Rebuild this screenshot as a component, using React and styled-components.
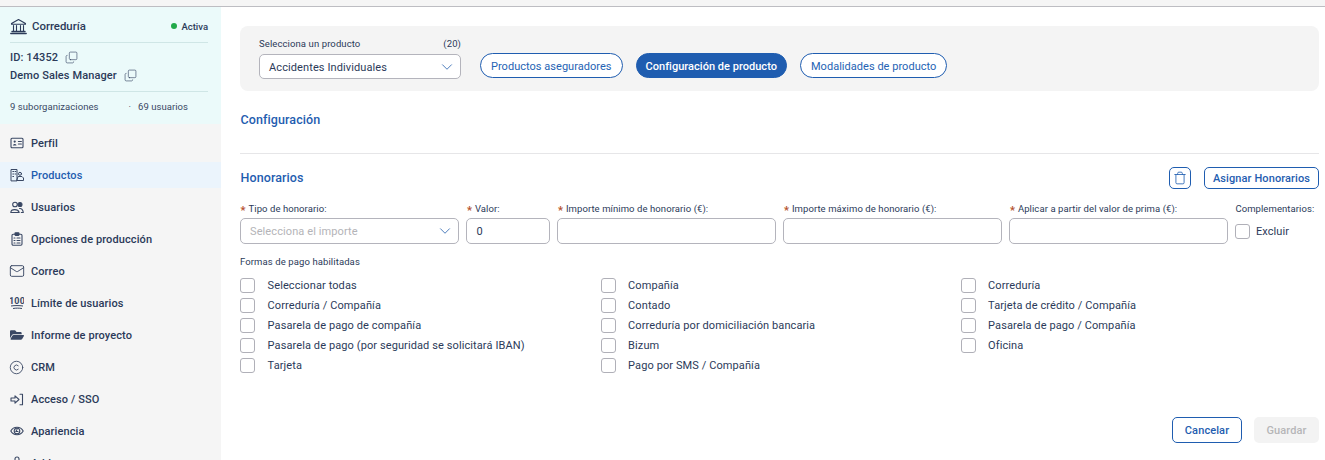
import React from "react";
import styled, { createGlobalStyle } from "styled-components";
import { Copy, Trash, ChevronDown, Mail, Copyright } from "lucide-react";
import { FaFolderOpen } from "react-icons/fa";

const Global = createGlobalStyle`
  html, body { margin: 0; padding: 0; height: 460px; overflow: hidden; background: #fff; }
  body { font-family: Roboto, "Liberation Sans", sans-serif; color: #2b3a59; }
  * { box-sizing: border-box; }
`;
const Page = styled.div`height: 460px; overflow: hidden; display: flex; flex-direction: column;`;
const TopStrip = styled.div`height: 7px; flex: none; background: #f5f5f5; border-bottom: 1px solid #bdbdc2;`;
const Body = styled.div`flex: 1; min-height: 0; display: flex;`;
const Sidebar = styled.aside`width: 221px; flex: none; background: #f5f5f5; overflow: hidden;`;
const OrgCard = styled.div`height: 117px; background: #ebfafa; padding: 10px 13px 0 10px; margin-bottom: 6px;`;
const OrgTop = styled.div`display: flex; align-items: center; height: 26px; padding-bottom: 7px; border-bottom: 1px solid #cfe6e6;`;
const OrgName = styled.span`font-size: 11.4px; font-weight: 500; margin-left: 5px; flex: 1; color: #2b3a59;`;
const Dot = styled.span`width: 6px; height: 6px; border-radius: 50%; background: #22a94a; margin-right: 4px;`;
const Status = styled.span`font-size: 9.5px; font-weight: 500;`;
const OrgLine = styled.div`display: flex; align-items: center; gap: 7px; font-size: 11px; font-weight: 500; height: 18px; letter-spacing: .1px;`;
const CopyIcon = styled(Copy)`transform: scaleY(-1); color: #2b3a59;`;
const OrgIds = styled.div`padding: 5px 0 7px; display: flex; flex-direction: column; border-bottom: 1px solid #cfe6e6;`;
const OrgStats = styled.div`display: flex; align-items: center; font-size: 9.5px; letter-spacing: .05px; height: 28px; color: #3a4864;`;
const StatSep = styled.span`margin: 0 7px 0 30px;`;
const Item = styled.div`
  height: 26px; margin-bottom: 6px; display: flex; align-items: center; gap: 8px; padding-left: 10px;
  font-size: 11px; font-weight: 500; letter-spacing: .1px;
  color: ${p => (p.$active ? "#1f5db0" : "#2b3a59")};
  background: ${p => (p.$active ? "#ebf4fc" : "transparent")};
`;
const IconBox = styled.span`width: 13px; height: 14px; flex: none; display: flex; align-items: center; justify-content: center; color: #3a4864; svg { flex: none; }`;

const Main = styled.main`flex: 1; min-width: 0; padding: 19px 6px 0 19px;`;
const Panel = styled.section`height: 65px; background: #f4f4f4; border-radius: 8px; padding: 12px 19px 0; display: flex; align-items: flex-start;`;
const ProductGroup = styled.div`width: 202px; flex: none;`;
const ProductLabel = styled.div`display: flex; justify-content: space-between; font-size: 9.5px; height: 16px; line-height: 12px; color: #2b3a59; letter-spacing: .1px;`;
const SelectBox = styled.div`
  height: ${p => p.$h || 25}px; background: #fff; border: 1px solid #b4b4bc; border-radius: 5px;
  display: flex; align-items: center; justify-content: space-between; padding: ${p => (p.$muted ? 0 : 1)}px 4px 0 9px;
  font-size: 11px; letter-spacing: .1px; color: ${p => (p.$muted ? "#b4b4b8" : "#2b3a59")};
  svg { color: #3b6fb5; margin-top: -1px; }
`;
const Pills = styled.div`display: flex; gap: 13px; margin: 15px 0 0 19px;`;
const Pill = styled.div`
  height: 25px; padding: 1px ${p => (p.$on ? 9 : 10)}px 0; border-radius: 13px; border: 1px solid #1f5db0; display: flex; align-items: center;
  font-size: 11px; letter-spacing: .03px;
  color: ${p => (p.$on ? "#fff" : "#2563b4")};
  font-weight: ${p => (p.$on ? 500 : 400)};
  background: ${p => (p.$on ? "#1f5db0" : "#fff")};
`;
const SectionTitle = styled.h2`margin: 0; padding-left: .5px; font-size: 12.5px; font-weight: 500; color: #1f5db0; letter-spacing: .1px; line-height: 16px;`;
const ConfigBlock = styled.div`padding-top: 21px; height: 63px; border-bottom: 1px solid #e6e6e8;`;
const HonHead = styled.div`display: flex; align-items: center; height: 22px; margin-top: 13px;`;
const Grow = styled.div`flex: 1;`;
const IconButton = styled.button`
  width: 22px; height: 22px; border: 1px solid #1f5db0; border-radius: 5px; background: #fff; color: #1f5db0; padding: 0;
  display: flex; align-items: center; justify-content: center; margin-right: 13px;
`;
const OutlineButton = styled.button`
  width: ${p => p.$w}px; height: ${p => p.$h}px; border: 1px solid #1f5db0; border-radius: 5px; background: #fff; color: #1f5db0;
  font: 500 11px Roboto, sans-serif; letter-spacing: .1px; padding: 0;
`;
const DisabledButton = styled.button`
  width: 65px; height: 26px; border: none; border-radius: 5px; background: #f3f3f3; color: #b6b6b8; margin-left: 12px;
  font: 500 11px Roboto, sans-serif; letter-spacing: .1px; padding: 0;
`;
const Fields = styled.div`display: grid; grid-template-columns: 219.4px 84px 219px 219px 219px auto; column-gap: 7px; margin-top: 14px;`;
const Field = styled.div`min-width: 0;`;
const FieldLabel = styled.div`display: flex; align-items: flex-start; font-size: 9.5px; line-height: 12px; height: 15px; white-space: nowrap; letter-spacing: .08px; color: #2b3a59;`;
const Star = styled.span`color: #b5502e; width: 8px; margin: 2px 0 0 .5px; font-size: 11px; font-weight: 700; flex: none;`;
const TextInput = styled.div`height: 26px; border: 1px solid #b4b4bc; border-radius: 5px; background: #fff; padding: 0 9px; display: flex; align-items: center; font-size: 11px; color: #2b3a59;`;
const Check = styled.span`width: 15px; height: 15px; border: 1px solid #b0b0b8; border-radius: 3px; background: #fff; flex: none; display: block;`;
const ExcludeRow = styled.div`display: flex; align-items: center; gap: 5.5px; height: 26px; font-size: 11px; letter-spacing: .1px;`;
const PayTitle = styled.div`font-size: 9.5px; line-height: 12px; margin-top: 12px; letter-spacing: .1px;`;
const PayGrid = styled.div`display: grid; grid-template-columns: 360.5px 360px auto; grid-auto-rows: 20px; margin-top: 7px;`;
const PayItem = styled.label`display: flex; align-items: center; gap: 12.6px; font-size: 11px; letter-spacing: .1px;`;
const Actions = styled.div`display: flex; justify-content: flex-end; margin-top: 42px;`;

const stroke = { fill: "none", stroke: "currentColor", strokeWidth: 1.1, strokeLinecap: "round", strokeLinejoin: "round" };
const BankIcon = () => (
  <svg width="17" height="17" viewBox="0 0 17 17" {...stroke}>
    <path d="M1.5 5.500 8.500 1.500l7 4v.8h-14z" /><path d="M3.500 7.500v5M6.500 7.500v5M10.500 7.500v5M13.500 7.500v5" />
    <path d="M2 13.500h13M.8 15.500h15.400" strokeWidth="1.4" />
  </svg>
);
const IdIcon = () => (
  <svg width="14" height="12" viewBox="0 0 14 12" {...stroke}>
    <rect x="1" y="1.200" width="12" height="9.600" rx="1" />
    <circle cx="4.700" cy="4.600" r="1.100" fill="currentColor" stroke="none" /><path d="M2.900 8.500c.3-2 3.300-2 3.600 0z" fill="currentColor" stroke="none" /><path d="M8.400 4.500h3M8.400 7h3" />
  </svg>
);
const ProductIcon = () => (
  <svg width="14" height="14" viewBox="0 0 14 14" {...stroke} strokeWidth="1">
    <path d="M1 12.500V1.500h6v11z" /><path d="M2.800 3.500h.8M5 3.500h.8M2.800 6h.8M5 6h.8M2.800 8.500h.8" />
    <path d="M7 12.500h6.500v-2.500l-1.500-1.500h-3.500z" /><circle cx="10" cy="5.800" r="1.500" />
  </svg>
);
const UsersIcon = () => (
  <svg width="14" height="13" viewBox="0 0 14 13" {...stroke}>
    <circle cx="5" cy="3.500" r="2.300" /><path d="M.8 11.500c.2-3.800 7.200-3.800 8.400 0z" />
    <circle cx="10" cy="3.500" r="2" fill="currentColor" /><path d="M9.500 7.500c2-.4 3.500 1.200 3.800 4h-2" />
  </svg>
);
const ClipIcon = () => (
  <svg width="12" height="14" viewBox="0 0 12 14" {...stroke}>
    <rect x="1" y="2.200" width="10" height="11" rx="1.200" /><rect x="4" y=".8" width="4" height="2.600" rx=".6" fill="currentColor" />
    <path d="M3 6h1M6 6h3M3 8.500h1M6 8.500h3M3 11h1M6 11h3" />
  </svg>
);
const HundredIcon = () => (
  <svg width="14" height="14" viewBox="0 0 14 14">
    <text x="7" y="8" textAnchor="middle" fontFamily="Roboto, sans-serif" fontWeight="700" fontSize="9" fill="currentColor">100</text>
    <path d="M1 10c4-.6 8-.6 12 0M3 12.500c3-.5 6-.5 9 0" fill="none" stroke="currentColor" strokeWidth="1" />
  </svg>
);
const LoginIcon = () => (
  <svg width="14" height="13" viewBox="0 0 14 13" {...stroke}>
    <path d="M1 5h4V2.800L9 6.500 5 10.200V8H1z" /><path d="M10 1.200h2.500v10.600H10" />
  </svg>
);
const EyeIcon = () => (
  <svg width="14" height="12" viewBox="0 0 14 12" {...stroke}>
    <path d="M.8 6C3.500 1 10.500 1 13.200 6 10.500 11 3.500 11 .8 6z" /><circle cx="7" cy="6" r="2.800" /><path d="M7 4.500 5.800 6.500H8" />
  </svg>
);
const AddonIcon = () => (
  <svg width="14" height="14" viewBox="0 0 14 14" {...stroke}>
    <path d="M2 5h3V3a2 2 0 0 1 4 0v2h3v7H2z" />
  </svg>
);

const nav = [
  ["Perfil", <IdIcon />], ["Productos", <ProductIcon />, true], ["Usuarios", <UsersIcon />],
  ["Opciones de producción", <ClipIcon />], ["Correo", <Mail size={16} strokeWidth={1.4} />],
  ["Límite de usuarios", <HundredIcon />], ["Informe de proyecto", <FaFolderOpen size={14} />],
  ["CRM", <Copyright size={15} strokeWidth={1.4} />], ["Acceso / SSO", <LoginIcon />],
  ["Apariencia", <EyeIcon />], ["Addons", <AddonIcon />],
];
const fields = [
  ["Valor:", "0"], ["Importe mínimo de honorario (€):", ""], ["Importe máximo de honorario (€):", ""],
  ["Aplicar a partir del valor de prima (€):", ""],
];
const pays = [
  "Seleccionar todas", "Compañía", "Correduría", "Correduría / Compañía", "Contado", "Tarjeta de crédito / Compañía",
  "Pasarela de pago de compañía", "Correduría por domiciliación bancaria", "Pasarela de pago / Compañía",
  "Pasarela de pago (por seguridad se solicitará IBAN)", "Bizum", "Oficina", "Tarjeta", "Pago por SMS / Compañía",
];

export default function App() {
  return (
    <Page>
      <Global />
      <TopStrip />
      <Body>
        <Sidebar>
          <OrgCard>
            <OrgTop><BankIcon /><OrgName>Correduría</OrgName><Dot /><Status>Activa</Status></OrgTop>
            <OrgIds>
              <OrgLine>ID: 14352 <CopyIcon size={13} strokeWidth={1.1} /></OrgLine>
              <OrgLine>Demo Sales Manager <CopyIcon size={13} strokeWidth={1.1} /></OrgLine>
            </OrgIds>
            <OrgStats>9 suborganizaciones<StatSep>·</StatSep>69 usuarios</OrgStats>
          </OrgCard>
          {nav.map(([label, icon, active]) => (
            <Item key={label} $active={active}><IconBox>{icon}</IconBox>{label}</Item>
          ))}
        </Sidebar>
        <Main>
          <Panel>
            <ProductGroup>
              <ProductLabel><span>Selecciona un producto</span><span>(20)</span></ProductLabel>
              <SelectBox>Accidentes Individuales<ChevronDown size={18} strokeWidth={1.2} /></SelectBox>
            </ProductGroup>
            <Pills>
              <Pill>Productos aseguradores</Pill>
              <Pill $on>Configuración de producto</Pill>
              <Pill>Modalidades de producto</Pill>
            </Pills>
          </Panel>
          <ConfigBlock><SectionTitle>Configuración</SectionTitle></ConfigBlock>
          <HonHead>
            <SectionTitle>Honorarios</SectionTitle><Grow />
            <IconButton aria-label="Eliminar"><Trash size={14} strokeWidth={1.4} /></IconButton>
            <OutlineButton $w={115} $h={22}>Asignar Honorarios</OutlineButton>
          </HonHead>
          <Fields>
            <Field>
              <FieldLabel><Star>*</Star>Tipo de honorario:</FieldLabel>
              <SelectBox $h={26} $muted>Selecciona el importe<ChevronDown size={18} strokeWidth={1.2} /></SelectBox>
            </Field>
            {fields.map(([l, v]) => (
              <Field key={l}><FieldLabel><Star>*</Star>{l}</FieldLabel><TextInput>{v}</TextInput></Field>
            ))}
            <Field>
              <FieldLabel>Complementarios:</FieldLabel>
              <ExcludeRow><Check />Excluir</ExcludeRow>
            </Field>
          </Fields>
          <PayTitle>Formas de pago habilitadas</PayTitle>
          <PayGrid>
            {pays.map(p => <PayItem key={p}><Check />{p}</PayItem>)}
          </PayGrid>
          <Actions>
            <OutlineButton $w={70} $h={26}>Cancelar</OutlineButton>
            <DisabledButton>Guardar</DisabledButton>
          </Actions>
        </Main>
      </Body>
    </Page>
  );
}
